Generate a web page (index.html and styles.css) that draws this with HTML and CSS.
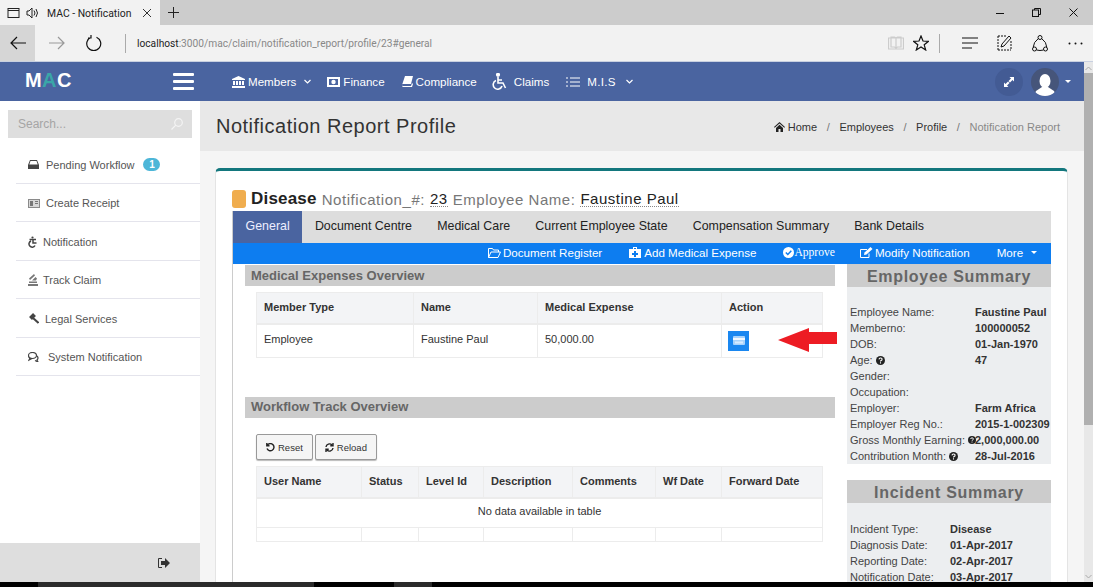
FILE: index.html
```html
<!DOCTYPE html>
<html lang="en">

<head>
  <meta charset="UTF-8">
  <meta name="viewport" content="width=device-width, initial-scale=1.0">
  <link rel="stylesheet" href="styles.css">
  <title>MAC - Notification</title>
</head>

<body>

  <div class="browser">

    <!-- browser tabs -->
    <div class="tabstrip">
      <div class="tab">
        <svg class="ic" width="13" height="12" viewBox="0 0 13 12" fill="none" stroke="#222"><rect x="1" y="1.500" width="11" height="9"/><path d="M1 3.500h11"/></svg>
        <svg class="ic spk" width="14" height="12" viewBox="0 0 14 12" fill="none" stroke="#222"><path d="M1 4h2l3-3v10L3 8H1zM8 3.500q2 2.500 0 5M10 2q3 4 0 8"/></svg>
        <span class="tab-title">MAC - Notification</span>
        <svg class="ic tab-close" width="10" height="10" viewBox="0 0 10 10" stroke="#333"><path d="M1 1l8 8M9 1l-8 8"/></svg>
      </div>
      <svg class="ic new-tab" width="11" height="11" viewBox="0 0 11 11" stroke="#222"><path d="M5.500 0v11M0 5.500h11"/></svg>
      <div class="win-btns">
        <svg class="ic" width="8" height="8" viewBox="0 0 8 8" stroke="#111"><path d="M0 4.500h8"/></svg>
        <svg class="ic" width="9" height="9" viewBox="0 0 9 9" fill="none" stroke="#111"><rect x=".5" y="2" width="6" height="6.500"/><path d="M2.500 2V.5h6v6H7"/></svg>
        <svg class="ic" width="9" height="9" viewBox="0 0 9 9" stroke="#111"><path d="M.5.5l8 8M8.500.5l-8 8"/></svg>
      </div>
    </div>

    <!-- address bar -->
    <div class="addressbar">
      <div class="nav-btn nav-back">
        <svg class="ic" width="16" height="14" viewBox="0 0 16 14" fill="none" stroke="#111" stroke-width="1.200"><path d="M16 7H1M7 1L1 7l6 6"/></svg>
      </div>
      <div class="nav-btn">
        <svg class="ic" width="16" height="14" viewBox="0 0 16 14" fill="none" stroke="#999" stroke-width="1.200"><path d="M0 7h15M9 1l6 6-6 6"/></svg>
      </div>
      <div class="nav-btn">
        <svg class="ic" width="16" height="16" viewBox="0 0 16 16" fill="none" stroke="#111" stroke-width="1.200"><path d="M10.500 2.200A7 7 0 1 1 5 2.200M5 0v3H2"/></svg>
      </div>
      <div class="url"><b>localhost</b>:3000/mac/claim/notification_report/profile/23#general</div>
      <div class="addr-tools">
        <svg class="ic" width="16" height="14" viewBox="0 0 16 14" fill="none" stroke="#ccc" stroke-width="1.200"><path d="M.5 2h15v11H.5zM8 2v11M3 1h3.500L8 2l1.500-1H13v10H9.500L8 12l-1.500-1H3z"/></svg>
        <svg class="ic star" width="16" height="16" viewBox="0 0 16 16" fill="none" stroke="#111" stroke-width="1.200"><path d="M8 1l2 5 5.500.3-4.300 3.500 1.500 5.200L8 12l-4.700 3 1.500-5.200L.5 6.300 6 6z"/></svg>
        <span class="addr-sep"></span>
        <svg class="ic hub" width="16" height="12" viewBox="0 0 16 12" fill="none" stroke="#111" stroke-width="1.200"><path d="M0 1h16M0 6h16M0 11h10"/></svg>
        <svg class="ic note" width="15" height="16" viewBox="0 0 15 16" fill="none" stroke="#111"><path d="M1 1h9M1 1v14M1 15h13M14 6v9" stroke-dasharray="2 1"/><path d="M4 12l1-3 7-8 2 2-7 8z"/></svg>
        <svg class="ic share" width="16" height="17" viewBox="0 0 16 17" fill="none" stroke="#111"><circle cx="8" cy="2.500" r="2"/><circle cx="2.500" cy="14" r="2"/><circle cx="13.500" cy="14" r="2"/><path d="M6.300 3.600Q1.500 7 1.200 12.300M9.700 3.600q4.800 3.400 5.100 8.700M4.500 15q3.500 1 7 0"/></svg>
        <svg class="ic dots" width="15" height="3" viewBox="0 0 15 3" fill="#111"><circle cx="1.500" cy="1.500" r="1"/><circle cx="7.500" cy="1.500" r="1"/><circle cx="13.500" cy="1.500" r="1"/></svg>
      </div>
    </div>

    <div class="viewport">
      <div class="page">

        <!-- top navigation -->
        <nav class="topnav">
          <div class="logo">M<span>A</span>C</div>
          <div class="burger"><i></i><i></i><i></i></div>
          <div class="menu">
            <a class="m-members">
              <svg class="ic" width="13" height="12" viewBox="0 0 13 12" fill="#fff"><path d="M6.500 0L13 3v1H0V3zM1 5h2v4H1zM4 5h2v4H4zM7 5h2v4H7zM10 5h2v4h-2zM0 10h13v2H0z"/></svg>
              Members
              <svg class="ic chev" width="7" height="5" viewBox="0 0 7 5" fill="none" stroke="#fff" stroke-width="1.200"><path d="M.5 1l3 3 3-3"/></svg>
            </a>
            <a class="m-finance">
              <svg class="ic" width="13" height="10" viewBox="0 0 13 10" fill="#fff"><path d="M0 0h13v10H0zM2 2v6h9V2z" fill-rule="evenodd"/><circle cx="6.500" cy="5" r="2.200"/></svg>
              Finance
            </a>
            <a class="m-compliance">
              <svg class="ic" width="11" height="11" viewBox="0 0 11 11" fill="#fff"><path d="M3 0h8L9 8H1a1 1 0 0 0 0 2h8l1-3 1 1-1 3H1Q0 11 0 9z"/></svg>
              Compliance
            </a>
            <a class="m-claims">
              <svg class="ic" width="16" height="17" viewBox="0 0 16 17" fill="none" stroke="#fff" stroke-width="1.600"><circle cx="6" cy="1.800" r="1.300" fill="#fff"/><path d="M6 4v6h5l2.500 5M6 7h4M4 7.500a4.500 4.500 0 1 0 6 5.500"/></svg>
              Claims
            </a>
            <a class="m-mis">
              <svg class="ic" width="14" height="10" viewBox="0 0 14 10" stroke="#fff"><path d="M0 1h2M4 1h10M0 5h2M4 5h10M0 9h2M4 9h10"/></svg>
              M.I.S
              <svg class="ic chev" width="7" height="5" viewBox="0 0 7 5" fill="none" stroke="#fff" stroke-width="1.200"><path d="M.5 1l3 3 3-3"/></svg>
            </a>
          </div>
          <div class="nav-right">
            <div class="round-btn">
              <svg class="ic" width="10" height="10" viewBox="0 0 10 10" fill="#fff"><path d="M5.500 0H10v4.500L8.500 3 6 5.500 4.500 4 7 1.500zM0 5.500V10h4.500L3 8.500 5.500 6 4 4.500 1.500 7z"/></svg>
            </div>
            <div class="avatar">
              <svg class="ic" width="20" height="22" viewBox="0 0 20 22" fill="#fff"><ellipse cx="10" cy="7" rx="5.500" ry="7"/><path d="M7 13l-6 4q-1 1-1 5h20q0-4-1-5l-6-4z"/></svg>
            </div>
            <span class="caret"></span>
          </div>
        </nav>

        <div class="layout">

          <!-- sidebar -->
          <aside class="sidebar">
            <div class="search">
              <span>Search...</span>
              <svg class="ic" width="12" height="12" viewBox="0 0 12 12" fill="none" stroke="#f4f4f4" stroke-width="1.200"><circle cx="7.500" cy="4.500" r="3.800"/><path d="M4.800 7.200L.5 11.500"/></svg>
            </div>
            <ul class="side-menu">
              <li>
                <svg class="ic" width="11" height="9" viewBox="0 0 11 9" fill="#444"><path d="M2 0h7l2 5v4H0V5zM2.500 1L1.300 4.500h8.400L8.500 1z" fill-rule="evenodd"/></svg>
                <span class="t-pending">Pending Workflow</span><span class="badge">1</span>
              </li>
              <li>
                <svg class="ic" width="12" height="9" viewBox="0 0 12 9"><rect width="12" height="9" fill="#8a8a8a"/><rect x="1" y="1" width="10" height="7" fill="#d8d8d8"/><path d="M2 2h3v5H2zM7 2h3v1H7zM7 4h3v1H7z" fill="#777"/></svg>
                <span class="t-pending">Create Receipt</span>
              </li>
              <li>
                <svg class="ic" width="9" height="12" viewBox="0 0 9 12" fill="none" stroke="#444" stroke-width="1.500"><circle cx="4.500" cy="1.500" r="1.100" fill="#444" stroke="none"/><path d="M1.500 3.500H8M5 3v4h3.500M3 5a3.200 3.200 0 1 0 4 4.500"/></svg>
                <span class="t-short">Notification</span>
              </li>
              <li>
                <svg class="ic" width="10" height="12" viewBox="0 0 10 12" fill="#777"><path d="M0 10h10v2H0zM1 7.500h8v1.500H1zM2 6l5-4.500L6 0 1 4.500zM4 6.500L7.500 3 9 4.500 8 6.500z"/></svg>
                <span class="t-short">Track Claim</span>
              </li>
              <li>
                <svg class="ic" width="11" height="11" viewBox="0 0 11 11" fill="none" stroke="#444"><path d="M2.500 5.500l4-4" stroke-width="4"/><path d="M5 5l5.500 5" stroke-width="2"/></svg>
                <span class="t-legal">Legal Services</span>
              </li>
              <li>
                <svg class="ic" width="11" height="10" viewBox="0 0 11 10" fill="none" stroke="#444" stroke-width="1.200"><ellipse cx="4.500" cy="3.500" rx="4" ry="3"/><path d="M2 6L1 8l3-1.500M9 4q2 2 0 4l1 2-3-1.500"/></svg>
                <span class="t-system">System Notification</span>
              </li>
            </ul>
            <div class="side-foot">
              <svg class="ic" width="12" height="10" viewBox="0 0 12 10" fill="#333"><path d="M4 0H1Q0 0 0 1v8q0 1 1 1h3V9H1V1h3z"/><path d="M3 3h4V0l5 5-5 5V7H3z"/></svg>
            </div>
          </aside>

          <!-- content -->
          <main class="content">
            <header class="page-head">
              <h1>Notification Report Profile</h1>
              <div class="crumbs">
                <svg class="ic" width="11" height="10" viewBox="0 0 11 10" fill="#222"><path d="M5.500 0L11 5l-.7.700-4.800-4.300L.7 5.700 0 5zM2 6l3.500-3.200L9 6v4H6.500V7h-2v3H2z"/></svg>
                <a class="c-home">Home</a><i>/</i><a>Employees</a><i>/</i><a>Profile</a><i>/</i><span>Notification Report</span>
              </div>
            </header>

            <section class="panel">
              <div class="title-row">
                <span class="swatch"></span>
                <b>Disease</b>
                <span class="lbl">Notification_#:</span> <span class="val">23</span>
                <span class="lbl">Employee Name:</span> <span class="val">Faustine Paul</span>
              </div>

              <div class="tabbed">
                <div class="tabs">
                  <a class="active">General</a>
                  <a>Document Centre</a>
                  <a>Medical Care</a>
                  <a>Current Employee State</a>
                  <a>Compensation Summary</a>
                  <a>Bank Details</a>
                </div>

                <div class="actions">
                  <a class="a-doc">
                    <svg class="ic" width="13" height="10" viewBox="0 0 13 10" fill="none" stroke="#fff"><path d="M.5 9.500V.5h4l1 1.500h5v2M.5 9.500h9.500l2.500-5.500H3z"/></svg>
                    Document Register
                  </a>
                  <a class="a-add">
                    <svg class="ic" width="12" height="11" viewBox="0 0 12 11" fill="#fff"><path d="M4 0h4v2h4v9H0V2h4zM5 1v1h2V1zM5 4v2H3v2h2v2h2V8h2V6H7V4z" fill-rule="evenodd"/></svg>
                    Add Medical Expense
                  </a>
                  <a class="a-approve">
                    <svg class="ic" width="11" height="11" viewBox="0 0 11 11"><circle cx="5.500" cy="5.500" r="5.500" fill="#fff"/><path d="M2.800 5.500l2 2 3.500-3.800" fill="none" stroke="#0d7df0" stroke-width="1.500"/></svg>
                    <span>Approve</span>
                  </a>
                  <a class="a-modify">
                    <svg class="ic" width="13" height="11" viewBox="0 0 13 11" fill="none" stroke="#fff"><path d="M9 6.500v4H.5v-8H7"/><path d="M4 8l.5-2.500L10.500 0 12.500 2l-6 5.500z" fill="#fff" stroke="none"/></svg>
                    Modify Notification
                  </a>
                  <a class="a-more">More <span class="caret"></span></a>
                </div>

                <div class="columns">
                  <div class="col-main">
                    <h3 class="section-head">Medical Expenses Overview</h3>
                    <table class="grid grid-exp">
                      <colgroup><col class="c1"><col class="c2"><col class="c3"><col class="c4"></colgroup>
                      <thead>
                        <tr><th>Member Type</th><th>Name</th><th>Medical Expense</th><th>Action</th></tr>
                      </thead>
                      <tbody>
                        <tr>
                          <td>Employee</td><td>Faustine Paul</td><td>50,000.00</td>
                          <td class="act-cell">
                            <span class="act-btn">
                              <svg class="ic" width="12" height="9" viewBox="0 0 12 9"><rect width="12" height="9" rx="1" fill="#a9d3fb"/><rect y="2" width="12" height="2" fill="#f2f9ff"/><rect x="2" y="5.500" width="8" height="2" fill="#d8ecff"/></svg>
                            </span>
                          </td>
                        </tr>
                      </tbody>
                    </table>

                    <h3 class="section-head wf-head">Workflow Track Overview</h3>
                    <div class="wf-btns">
                      <button>
                        <svg class="ic" width="9" height="9" viewBox="0 0 9 9" fill="none" stroke="#222" stroke-width="1.400"><path d="M1.500 2A3.600 3.600 0 1 1 1 5.500M.8 0v2.700h2.700"/></svg>
                        Reset
                      </button>
                      <button>
                        <svg class="ic" width="9" height="9" viewBox="0 0 9 9" fill="none" stroke="#222" stroke-width="1.400"><path d="M1 4a3.500 3.500 0 0 1 6-2M8 5a3.500 3.500 0 0 1-6 2M8 0v2.700H5.300M1 9V6.300h2.700"/></svg>
                        Reload
                      </button>
                    </div>
                    <table class="grid grid-wf">
                      <colgroup><col class="w1"><col class="w2"><col class="w3"><col class="w4"><col class="w5"><col class="w6"><col class="w7"></colgroup>
                      <thead>
                        <tr><th>User Name</th><th>Status</th><th>Level Id</th><th>Description</th><th>Comments</th><th>Wf Date</th><th>Forward Date</th></tr>
                      </thead>
                      <tbody>
                        <tr class="empty"><td colspan="7">No data available in table</td></tr>
                        <tr class="spacer"><td></td><td></td><td></td><td></td><td></td><td></td><td></td></tr>
                      </tbody>
                    </table>
                  </div>

                  <div class="col-side">
                    <h2 class="sum-head">Employee Summary</h2>
                    <dl class="sum sum-emp">
                      <dt>Employee Name:</dt><dd>Faustine Paul</dd>
                      <dt>Memberno:</dt><dd>100000052</dd>
                      <dt>DOB:</dt><dd>01-Jan-1970</dd>
                      <dt>Age: <svg class="ic help" width="9" height="9" viewBox="0 0 10 10"><circle cx="5" cy="5" r="5" fill="#222"/><path d="M3.300 3.800Q3.500 2.200 5.100 2.300q1.700.1 1.600 1.500 0 .8-1 1.300-.7.400-.7 1M5 7v1.200" fill="none" stroke="#fff" stroke-width="1.200"/></svg></dt><dd>47</dd>
                      <dt>Gender:</dt><dd></dd>
                      <dt>Occupation:</dt><dd></dd>
                      <dt>Employer:</dt><dd>Farm Africa</dd>
                      <dt>Employer Reg No.:</dt><dd>2015-1-002309</dd>
                      <dt>Gross Monthly Earning: <svg class="ic help" width="8" height="8" viewBox="0 0 10 10"><circle cx="5" cy="5" r="5" fill="#222"/><path d="M3.300 3.800Q3.500 2.200 5.100 2.300q1.700.1 1.600 1.500 0 .8-1 1.300-.7.400-.7 1M5 7v1.200" fill="none" stroke="#fff" stroke-width="1.200"/></svg></dt><dd>2,000,000.00</dd>
                      <dt>Contribution Month: <svg class="ic help" width="9" height="9" viewBox="0 0 10 10"><circle cx="5" cy="5" r="5" fill="#222"/><path d="M3.300 3.800Q3.500 2.200 5.100 2.300q1.700.1 1.600 1.500 0 .8-1 1.300-.7.400-.7 1M5 7v1.200" fill="none" stroke="#fff" stroke-width="1.200"/></svg></dt><dd>28-Jul-2016</dd>
                    </dl>
                    <h2 class="sum-head inc-head">Incident Summary</h2>
                    <dl class="sum sum-inc">
                      <dt>Incident Type:</dt><dd>Disease</dd>
                      <dt>Diagnosis Date:</dt><dd>01-Apr-2017</dd>
                      <dt>Reporting Date:</dt><dd>02-Apr-2017</dd>
                      <dt>Notification Date:</dt><dd>03-Apr-2017</dd>
                    </dl>
                  </div>
                </div>

                <!-- red annotation arrow on top of the table -->
                <svg class="arrow" width="59" height="24" viewBox="0 0 59 24" fill="#ed1c24"><path d="M0 12L31 0v4h28v12H31v8z"/></svg>
              </div>
            </section>
          </main>
        </div>
      </div>

      <div class="scrollbar">
        <svg class="ic" width="7" height="5" viewBox="0 0 7 5" fill="none" stroke="#aaa"><path d="M.5 4l3-3 3 3"/></svg>
        <div class="thumb"></div>
        <svg class="ic scroll-down" width="7" height="5" viewBox="0 0 7 5" fill="none" stroke="#aaa"><path d="M.5 1l3 3 3-3"/></svg>
      </div>
    </div>

    <div class="taskbar"><i class="tb-a"></i><i class="tb-b"></i></div>
  </div>

</body>

</html>
```

FILE: styles.css
```css
* {
  box-sizing: border-box;
}

html, body {
  height: 100%;
}

body {
  margin: 0;
  overflow: hidden;
  font-family: "Liberation Sans", Arial, sans-serif;
  font-size: 11px;
  color: #333;
  background: #fff;
}

.ic {
  display: inline-block;
  flex: none;
  vertical-align: middle;
}

.browser {
  display: flex;
  flex-direction: column;
  height: 587px;
}

/* browser chrome */
.tabstrip {
  display: flex;
  align-items: center;
  height: 25px;
  background: #cccccc;
}

.tab {
  display: flex;
  align-items: center;
  width: 160px;
  height: 25px;
  padding-left: 7px;
  background: #f2f2f2;
}

.spk {
  margin-left: 6px;
}

.tab-title {
  margin-left: 7px;
  padding-top: 2px;
  font-family: Roboto, sans-serif;
  font-size: 10.400px;
  color: #222;
  white-space: nowrap;
}

.tab-close {
  margin-left: 11px;
}

.new-tab {
  margin-left: 8px;
}

.win-btns {
  display: flex;
  align-items: center;
  gap: 28px;
  margin-left: auto;
  padding-right: 15px;
}

.addressbar {
  display: flex;
  align-items: center;
  height: 36px;
  background: #f2f2f2;
}

.nav-btn {
  display: flex;
  align-items: center;
  justify-content: center;
  width: 35px;
  height: 36px;
  margin-right: 2px;
}

.nav-back {
  background: #d6d6d6;
  margin-right: 4px;
}

.url {
  height: 19px;
  margin-left: 12px;
  padding-left: 11px;
  border-left: 1px solid #aaa;
  font-family: Roboto, sans-serif;
  font-size: 10.200px;
  line-height: 19px;
  color: #888;
  white-space: nowrap;
}

.url b {
  font-weight: 400;
  color: #222;
}

.addr-tools {
  display: flex;
  align-items: center;
  margin-left: auto;
  padding-right: 10px;
}

.star {
  margin-left: 9px;
}

.addr-sep {
  width: 1px;
  height: 19px;
  margin-left: 10px;
  background: #aaa;
}

.hub {
  margin-left: 22px;
}

.note {
  margin-left: 19px;
}

.share {
  margin-left: 20px;
}

.dots {
  margin-left: 20px;
}

/* page viewport */
.viewport {
  display: flex;
  flex: 1;
  min-height: 0;
  border-top: 1px solid #c8d0e0;
}

.page {
  flex: 1;
  min-width: 0;
  display: flex;
  flex-direction: column;
}

.scrollbar {
  display: flex;
  flex-direction: column;
  align-items: center;
  width: 9px;
  background: #e8e8e8;
  padding-top: 4px;
}

.thumb {
  width: 100%;
  height: 352px;
  margin-top: 2px;
  background: #b0b0b0;
}

.scroll-down {
  margin-top: auto;
  margin-bottom: 3px;
}

.taskbar {
  display: flex;
  height: 5px;
  background: #000;
}

.tb-a {
  width: 276px;
  margin-left: 38px;
  background: #2b2b2b;
}

.tb-b {
  width: 38px;
  margin-left: 80px;
  background: #2b2b2b;
}

/* top navigation */
.topnav {
  display: flex;
  align-items: center;
  flex: none;
  height: 39px;
  background: #4a64a0;
  color: #fff;
  font-size: 11.600px;
}

.logo {
  width: 173px;
  padding-left: 25px;
  font-size: 20px;
  font-weight: 700;
  letter-spacing: .4px;
  margin-top: -3px;
}

.logo span {
  color: #3aa6a8;
}

.burger {
  display: flex;
  flex-direction: column;
  gap: 4px;
  width: 21px;
}

.burger i {
  height: 3px;
  border-radius: 1px;
  background: #fff;
}

.menu {
  display: flex;
  align-items: center;
  margin-left: 38px;
}

.menu a {
  display: flex;
  align-items: center;
  gap: 3px;
  white-space: nowrap;
}

.chev {
  margin-left: 5px;
}

.m-finance {
  margin-left: 16px;
}

.m-compliance {
  margin-left: 17px;
}

.m-claims {
  margin-left: 15px;
}

.m-claims .ic {
  margin-right: 3px;
}

.m-mis {
  margin-left: 17px;
  letter-spacing: .3px;
}

.m-mis .ic:first-child {
  margin-right: 4px;
}

.m-mis .chev {
  margin-left: 7px;
}

.nav-right {
  display: flex;
  align-items: center;
  margin-left: auto;
  padding-right: 13px;
}

.round-btn, .avatar {
  display: flex;
  align-items: center;
  justify-content: center;
  width: 28px;
  height: 28px;
  border-radius: 50%;
  overflow: hidden;
}

.round-btn {
  background: #435b94;
  margin-right: 8px;
}

.avatar {
  background: #46557a;
  align-items: flex-end;
  margin-right: 6px;
}

.caret {
  display: inline-block;
  width: 0;
  height: 0;
  border-top: 3px solid #fff;
  border-left: 3px solid transparent;
  border-right: 3px solid transparent;
  vertical-align: middle;
}

/* sidebar + content */
.layout {
  display: flex;
  flex: 1;
  min-height: 0;
}

.sidebar {
  display: flex;
  flex-direction: column;
  flex: none;
  width: 200px;
  background: #fff;
}

.search {
  display: flex;
  align-items: center;
  justify-content: space-between;
  height: 28px;
  margin: 9px 8px 0;
  padding: 0 9px 0 10px;
  background: #dedede;
  font-size: 12px;
  color: #a5a5a5;
}

.side-menu {
  list-style: none;
  margin: 7px 0 0 16px;
  padding: 0;
}

.side-menu li {
  display: flex;
  align-items: center;
  height: 38.500px;
  padding: 2px 0 0 12px;
  border-bottom: 1px solid #e4e4ec;
  color: #555;
}

.t-pending {
  margin-left: 7px;
}

.side-menu li:nth-child(2) .ic {
  margin-right: -1px;
}

.t-short {
  margin-left: 6px;
}

.side-menu li:nth-child(4) .t-short {
  margin-left: 5px;
}

.t-legal {
  margin-left: 6px;
}

.t-system {
  margin-left: 9px;
}

.badge {
  width: 17px;
  height: 13px;
  margin-left: 9px;
  border-radius: 7px;
  background: #4db6d8;
  color: #fff;
  font-size: 10px;
  font-weight: 700;
  line-height: 13px;
  text-align: center;
}

.side-foot {
  display: flex;
  align-items: center;
  justify-content: flex-end;
  height: 39px;
  margin-top: auto;
  padding-right: 30px;
  background: #dedede;
}

.content {
  flex: 1;
  min-width: 0;
  overflow: hidden;
  background: #f5f5f5;
}

.page-head {
  display: flex;
  align-items: center;
  justify-content: space-between;
  height: 50px;
  padding: 0 24px 0 16px;
  background: #e8e8e8;
}

.page-head h1 {
  margin: 0;
  font-size: 20px;
  font-weight: 400;
  letter-spacing: .5px;
  color: #333;
}

.crumbs {
  display: flex;
  align-items: center;
  margin-top: 2px;
  color: #333;
}

.c-home {
  margin-left: 3px;
}

.crumbs i {
  margin: 0 9.600px;
  font-style: normal;
  color: #777;
}

.crumbs span {
  color: #888;
}

.panel {
  height: 500px;
  margin: 17px 16px 0 15px;
  padding: 18px 0 0 16px;
  background: #fff;
  border-top: 3px solid #13777d;
  border-left: 1px solid #e4e4e4;
  border-right: 1px solid #e4e4e4;
  border-radius: 5px 5px 0 0;
}

.title-row {
  display: flex;
  align-items: center;
  height: 20px;
  font-size: 15px;
  letter-spacing: .5px;
  white-space: pre;
}

.swatch {
  width: 14px;
  height: 18px;
  margin-right: 5px;
  border-radius: 3px;
  background: #f0ad4e;
}

.title-row b {
  font-size: 17px;
  letter-spacing: .2px;
  color: #222;
  margin-right: 5px;
}

.lbl {
  color: #777;
  letter-spacing: .55px;
  margin-right: 5px;
}

.val {
  color: #222;
  margin-right: 5px;
  border-bottom: 1px dotted #888;
  line-height: 15px;
}

.tabbed {
  position: relative;
  width: 819px;
  height: 400px;
  margin-top: 2px;
  border-left: 1px solid #ccc;
}

.tabs {
  display: flex;
  height: 32px;
  background: #dddddd;
  font-size: 12.400px;
  line-height: 31px;
  color: #222;
}

.tabs a {
  padding: 0 12.600px;
  white-space: nowrap;
}

.tabs .active {
  background: #4a64a0;
  color: #eef;
}

.actions {
  display: flex;
  align-items: center;
  height: 21px;
  background: #0d7df0;
  color: #fff;
  font-size: 11.600px;
  white-space: nowrap;
  padding: 0 0 2px 255px;
}

.actions a {
  display: flex;
  align-items: center;
  gap: 3px;
}

.actions .a-doc {
  gap: 2px;
}

.actions .a-add {
  margin-left: 27px;
}

.actions .a-approve {
  margin-left: 27px;
  gap: 0;
}

.a-approve span {
  font-family: "Liberation Serif", serif;
}

.actions .a-modify {
  margin-left: 25px;
  gap: 2px;
}

.actions .a-more {
  margin-left: 27px;
  gap: 8px;
}

.columns {
  display: flex;
  align-items: flex-start;
}

.col-main {
  flex: none;
  width: 602px;
  padding: 1px 0 0 12px;
}

.section-head {
  height: 21px;
  margin: 0;
  padding-left: 6px;
  background: #cccccc;
  font-size: 13px;
  line-height: 21px;
  color: #666;
}

.wf-head {
  margin-top: 39px;
  line-height: 20px;
}

/* tables */
.grid {
  table-layout: fixed;
  border-collapse: collapse;
  width: 566px;
  margin-left: 11px;
  font-size: 11px;
  color: #333;
}

.grid-exp {
  margin-top: 6px;
}

.grid th {
  height: 31px;
  padding: 0 7px 1px;
  background: #f3f4f6;
  border: 1px solid #ececec;
  border-bottom-width: 2px;
  color: #333;
  text-align: left;
}

.grid td {
  height: 34px;
  padding: 0 7px 3px;
  border: 1px solid #ececec;
}

.grid .act-cell {
  padding: 0 6px;
}

.c1 { width: 157px; }
.c2 { width: 124px; }
.c3 { width: 184px; }
.c4 { width: 101px; }

.w1 { width: 105px; }
.w2 { width: 57px; }
.w3 { width: 65px; }
.w4 { width: 89px; }
.w5 { width: 83px; }
.w6 { width: 66px; }
.w7 { width: 101px; }

.act-btn {
  display: flex;
  align-items: center;
  justify-content: center;
  width: 21px;
  height: 20px;
  background: #1a87f0;
}

.wf-btns {
  display: flex;
  gap: 2px;
  margin: 16px 0 6px 11px;
}

.wf-btns button {
  display: flex;
  align-items: center;
  gap: 3px;
  height: 26px;
  padding: 0 9px;
  border: 1px solid #999;
  border-radius: 2px;
  background: #f5f5f5;
  box-shadow: 0 1px 1px #bbb;
  font-family: inherit;
  font-size: 9.500px;
  color: #333;
}

.grid .empty td {
  height: 30px;
  text-align: center;
}

.grid .spacer td {
  height: 14px;
}

/* right column */
.col-side {
  flex: none;
  width: 204px;
  margin-left: 12px;
  color: #333;
}

.sum-head {
  height: 23px;
  margin: 0;
  background: #cccccc;
  font-size: 16px;
  line-height: 25px;
  letter-spacing: .7px;
  text-align: center;
  color: #666;
}

.inc-head {
  margin-top: 16px;
}

.sum {
  display: grid;
  margin: 0;
  padding: 17px 0 0 3px;
  background: #eceef0;
  line-height: 16px;
}

.sum-emp {
  grid-template-columns: 125px 1fr;
}

.sum-inc {
  grid-template-columns: 100px 1fr;
  padding-top: 18px;
  padding-bottom: 30px;
}

.sum dt {
  color: #444;
  white-space: nowrap;
}

.sum dd {
  margin: 0;
  font-weight: 700;
  white-space: nowrap;
}

.help {
  margin-top: -2px;
}

.arrow {
  position: absolute;
  left: 545px;
  top: 117px;
}
```
